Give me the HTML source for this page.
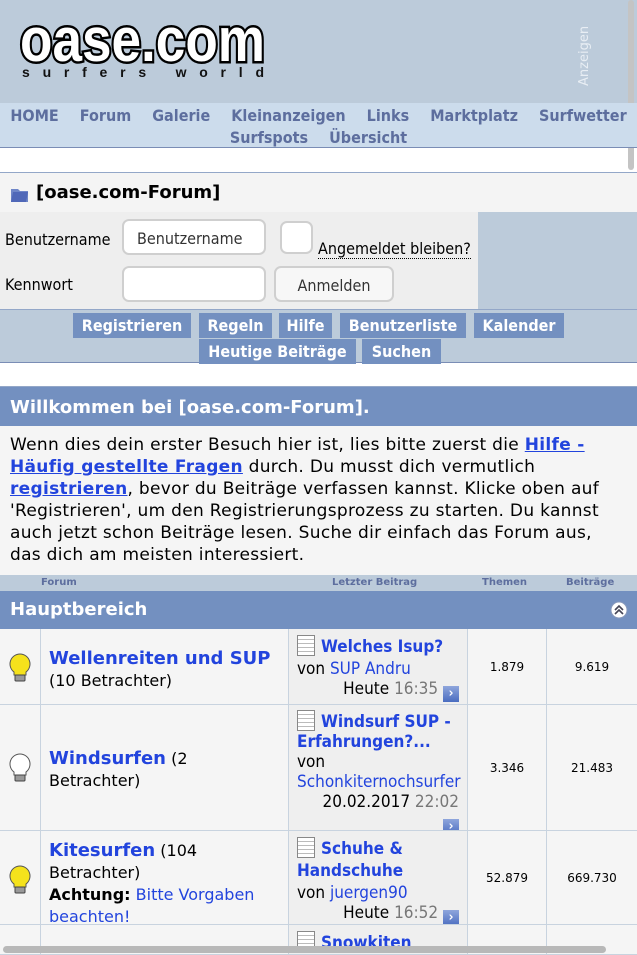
<!DOCTYPE html>
<html><head><meta charset="utf-8"><style>
*{margin:0;padding:0;box-sizing:border-box}
body{width:637px;height:955px;overflow:hidden;background:#fff;font-family:"DejaVu Sans",sans-serif;color:#000;position:relative}
.abs{position:absolute}
a{color:#2244dd}
#hdr{left:0;top:0;width:637px;height:103px;background:#bccbda}
#nav{left:0;top:103px;width:637px;height:45px;background:#ccdcec;border-bottom:1px solid #7a8db5;text-align:center;font-weight:bold;font-size:16px;color:#5d6e9e;line-height:22px;padding-top:2px;white-space:nowrap;font-family:"DejaVu Sans Condensed","DejaVu Sans",sans-serif;overflow:hidden}
#nav span{margin:0 8px}
#title{left:0;top:172px;width:637px;height:40px;background:#f4f4f4;border-top:1px solid #93a7c8;font-weight:bold;font-size:18px;padding:9px 0 0 36px}
#login{left:0;top:212px;width:478px;height:97px;background:#eeeeee;font-size:15px;font-family:"DejaVu Sans Condensed","DejaVu Sans",sans-serif}
#loginr{left:478px;top:212px;width:159px;height:97px;background:#bccbda}
.inp{position:absolute;background:#fff;border:2px solid #cfcfcf;border-radius:7px;font-size:16px;color:#333}
#btns{left:0;top:309px;width:637px;height:54px;background:#bccbda;border-top:1px solid #93a7c8;border-bottom:1px solid #7a8db5}
.b{position:absolute;background:#7390c0;color:#fff;font-weight:bold;font-size:16px;height:25px;line-height:25px;text-align:center;font-family:"DejaVu Sans Condensed","DejaVu Sans",sans-serif}
#wh{left:0;top:386px;width:637px;height:40px;background:#7390c0;border-top:1px solid #93a7c8;color:#fff;font-weight:bold;font-size:18px;padding:10px 0 0 10px}
#wb{left:0;top:426px;width:637px;height:149px;background:#f5f5f5;font-size:17px;line-height:22px;padding:8px 10px;letter-spacing:0.3px}
#wb a{font-weight:bold;text-decoration:underline}
#ch{left:0;top:575px;width:637px;height:16px;background:#bccbda;font-size:10px;font-weight:bold;color:#5d6e9e}
#hb{left:0;top:591px;width:637px;height:38px;background:#7390c0;color:#fff;font-weight:bold;font-size:18px;padding:8px 0 0 10px}
.row{position:absolute;left:0;width:637px;background:#c8d3df}
.c{position:absolute;top:0;bottom:1px;background:#f5f5f5;overflow:hidden}
.lp{background:#efefef}
.num{font-size:12px;text-align:center;display:flex;align-items:center;justify-content:center}
.ft{font-size:16px;line-height:22px}
.ft a.t{font-weight:bold;font-size:18px}
.lpc{font-size:17px;line-height:22px;padding:6px 0 0 8px;font-family:"DejaVu Sans Condensed","DejaVu Sans",sans-serif}
.lpc a.t{font-weight:bold}
.dt{text-align:right;padding-right:8px}
.g{color:#777}
.arr{display:inline-block;width:16px;height:16px;background:linear-gradient(#8fa6dc,#4a6cc0);vertical-align:-3px;color:#fff;font-size:13px;line-height:16px;text-align:center;font-weight:bold}
.doc{display:inline-block;width:18px;height:21px;border:1px solid #888;background:repeating-linear-gradient(#fff 0 3px,#bbb 3px 4px);vertical-align:-4px;margin-right:6px}
.bulb{position:absolute;left:9px;width:22px;height:30px}
</style></head><body>
<div id="hdr" class="abs">
<svg width="637" height="103" style="position:absolute;left:0;top:0">
<text x="20" y="61" font-family="Liberation Sans" font-weight="bold" font-size="62" fill="#fff" stroke="#000" stroke-width="5" paint-order="stroke" textLength="245" lengthAdjust="spacingAndGlyphs">oase.com</text>
<text x="22" y="77" font-family="Liberation Sans" font-weight="bold" font-size="14" fill="#111" textLength="242" lengthAdjust="spacing">surfers world</text>
<text transform="translate(588,86) rotate(-90)" font-family="DejaVu Sans" font-size="13" fill="#e8eef4">Anzeigen</text>
</svg>
<div style="position:absolute;left:628px;top:0;width:6px;height:170px;background:#c4c4c4;border-radius:3px"></div>
</div>
<div id="nav" class="abs"><div><span style="margin-left:0">HOME</span> <span>Forum</span> <span>Galerie</span> <span>Kleinanzeigen</span> <span>Links</span> <span>Marktplatz</span> <span style="margin-right:0">Surfwetter</span></div><div><span>Surfspots</span> <span>Übersicht</span></div></div>
<div id="title" class="abs"><svg width="20" height="18" style="position:absolute;left:10px;top:12px"><path d="M1 4h7l2 2h8v11H1z" fill="#6f86c8"/><path d="M3 7h15l-2 10H1z" fill="#5068b8"/></svg>[oase.com-Forum]</div>
<div id="login" class="abs">
<div class="abs" style="left:5px;top:18px;font-size:16px">Benutzername</div>
<div class="inp" style="left:122px;top:7px;width:144px;height:36px;padding:8px 0 0 13px">Benutzername</div>
<div class="inp" style="left:280px;top:9px;width:33px;height:33px"></div>
<div class="abs" style="left:318px;top:28px;border-bottom:1px dotted #000;line-height:18px;font-size:16px">Angemeldet bleiben?</div>
<div class="abs" style="left:5px;top:63px;font-size:16px">Kennwort</div>
<div class="inp" style="left:122px;top:54px;width:144px;height:36px"></div>
<div class="inp" style="left:274px;top:54px;width:120px;height:36px;background:#f7f7f7;text-align:center;padding-top:8px">Anmelden</div>
</div>
<div id="loginr" class="abs"></div>
<div id="btns" class="abs">
<div class="b" style="left:73px;top:3px;width:118px">Registrieren</div>
<div class="b" style="left:199px;top:3px;width:73px">Regeln</div>
<div class="b" style="left:279px;top:3px;width:53px">Hilfe</div>
<div class="b" style="left:340px;top:3px;width:126px">Benutzerliste</div>
<div class="b" style="left:474px;top:3px;width:90px">Kalender</div>
<div class="b" style="left:199px;top:29px;width:157px">Heutige Beiträge</div>
<div class="b" style="left:362px;top:29px;width:79px">Suchen</div>
</div>
<div id="wh" class="abs">Willkommen bei [oase.com-Forum].</div>
<div id="wb" class="abs">Wenn dies dein erster Besuch hier ist, lies bitte zuerst die <a>Hilfe - Häufig gestellte Fragen</a> durch. Du musst dich vermutlich <a>registrieren</a>, bevor du Beiträge verfassen kannst. Klicke oben auf 'Registrieren', um den Registrierungsprozess zu starten. Du kannst auch jetzt schon Beiträge lesen. Suche dir einfach das Forum aus, das dich am meisten interessiert.</div>
<div id="ch" class="abs"><span class="abs" style="left:41px;top:2px">Forum</span><span class="abs" style="left:332px;top:2px">Letzter Beitrag</span><span class="abs" style="left:482px;top:2px">Themen</span><span class="abs" style="left:566px;top:2px">Beiträge</span></div>
<div id="hb" class="abs">Hauptbereich<svg width="18" height="18" style="position:absolute;left:610px;top:10px"><circle cx="9" cy="9" r="8" fill="#fff" stroke="#8899bb"/><path d="M5 9l4-4 4 4M5 13l4-4 4 4" fill="none" stroke="#445" stroke-width="1.6"/></svg></div>

<div class="row" style="top:629px;height:76px">
<div class="c" style="left:0;width:40px"><svg class="bulb" style="top:24px" viewBox="0 0 22 30"><path d="M11 1a10 10 0 0 0-6 18v3h12v-3a10 10 0 0 0-6-18z" fill="#f5e21c" stroke="#555"/><rect x="6" y="22" width="10" height="6" rx="1" fill="#999" stroke="#444"/></svg></div>
<div class="c ft" style="left:41px;width:247px;padding:19px 0 0 8px"><a class="t">Wellenreiten und SUP</a><br>(10 Betrachter)</div>
<div class="c lp lpc" style="left:289px;width:178px"><span class="doc"></span><a class="t">Welches Isup?</a><br>von <a>SUP Andru</a><div class="dt" style="line-height:18px">Heute <span class="g">16:35</span> <span class="arr">›</span></div></div>
<div class="c num" style="left:468px;width:78px">1.879</div>
<div class="c num" style="left:547px;width:90px">9.619</div>
</div>
<div class="row" style="top:705px;height:126px">
<div class="c" style="left:0;width:40px"><svg class="bulb" style="top:48px" viewBox="0 0 22 30"><path d="M11 1a10 10 0 0 0-6 18v3h12v-3a10 10 0 0 0-6-18z" fill="#fff" stroke="#555"/><rect x="6" y="22" width="10" height="6" rx="1" fill="#999" stroke="#444"/></svg></div>
<div class="c ft" style="left:41px;width:247px;padding:43px 0 0 8px"><a class="t">Windsurfen</a> (2<br>Betrachter)</div>
<div class="c lp lpc" style="left:289px;width:178px;padding-top:5px;line-height:20px"><span class="doc"></span><a class="t">Windsurf SUP - Erfahrungen?...</a><br>von<br><a>Schonkiternochsurfer</a><div class="dt">20.02.2017 <span class="g">22:02</span><br><span class="arr">›</span></div></div>
<div class="c num" style="left:468px;width:78px">3.346</div>
<div class="c num" style="left:547px;width:90px">21.483</div>
</div>
<div class="row" style="top:831px;height:94px">
<div class="c" style="left:0;width:40px"><svg class="bulb" style="top:34px" viewBox="0 0 22 30"><path d="M11 1a10 10 0 0 0-6 18v3h12v-3a10 10 0 0 0-6-18z" fill="#f5e21c" stroke="#555"/><rect x="6" y="22" width="10" height="6" rx="1" fill="#999" stroke="#444"/></svg></div>
<div class="c ft" style="left:41px;width:247px;padding:9px 0 0 8px"><a class="t">Kitesurfen</a> (104<br>Betrachter)<br><b>Achtung:</b> <a>Bitte Vorgaben beachten!</a></div>
<div class="c lp lpc" style="left:289px;width:178px"><span class="doc"></span><a class="t">Schuhe &amp; Handschuhe</a><br>von <a>juergen90</a><div class="dt" style="line-height:18px">Heute <span class="g">16:52</span> <span class="arr">›</span></div></div>
<div class="c num" style="left:468px;width:78px">52.879</div>
<div class="c num" style="left:547px;width:90px">669.730</div>
</div>
<div class="row" style="top:925px;height:30px">
<div class="c" style="left:0;width:40px"></div>
<div class="c" style="left:41px;width:247px"></div>
<div class="c lp lpc" style="left:289px;width:178px"><span class="doc"></span><a class="t">Snowkiten</a></div>
<div class="c" style="left:468px;width:78px"></div>
<div class="c" style="left:547px;width:90px"></div>
</div>
<div class="abs" style="left:3px;top:946px;width:603px;height:7px;background:#b8b8b8;border-radius:4px"></div>
</body></html>
